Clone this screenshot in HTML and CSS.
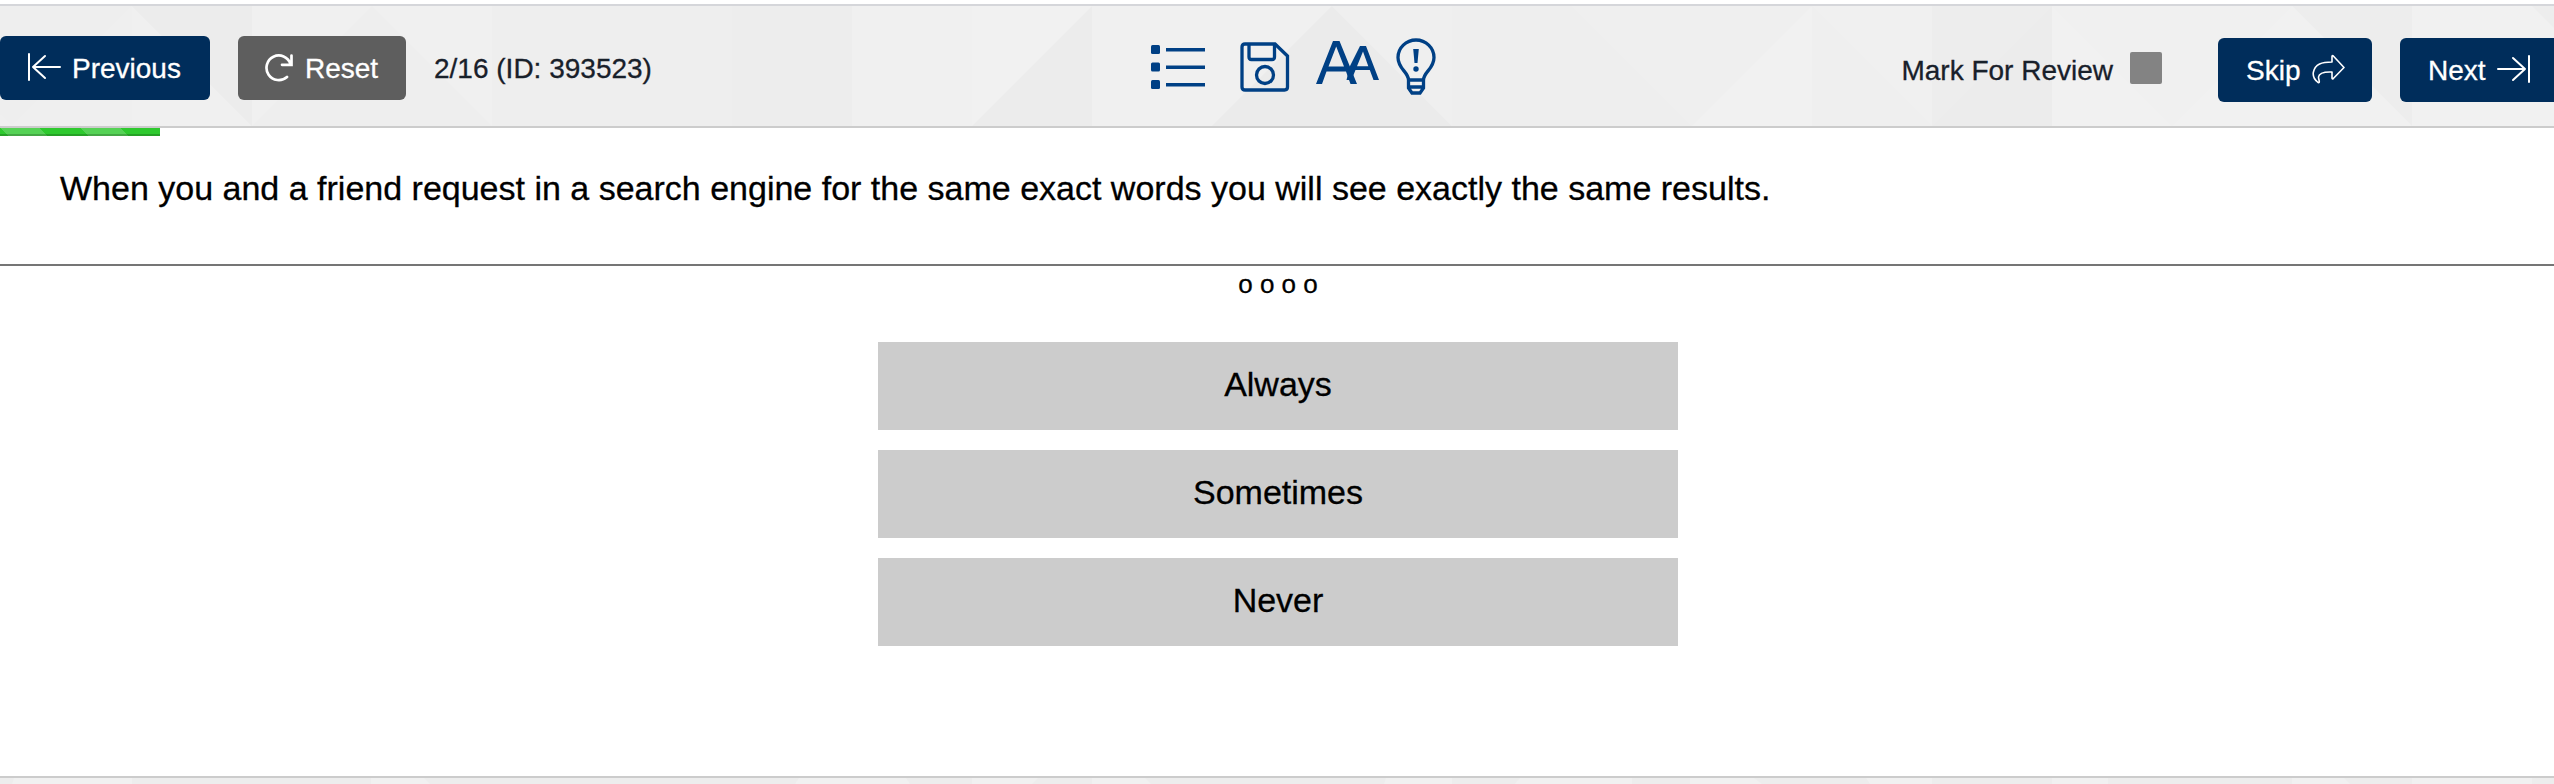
FILE: index.html
```
<!DOCTYPE html>
<html lang="en">
<head>
<meta charset="utf-8">
<title>Question 2/16</title>
<link rel="stylesheet" href="styles.css">
</head>
<body>
<header class="toolbar">
  <svg class="pattern" viewBox="0 0 2554 120" width="2554" height="120" aria-hidden="true">
    <path fill="#f0f0f0" d="M132 0v120h120zM252 0h120L252 120zM372 0h120v120zM852 0h120v120H852zM1092 0h120v120h-120zM1212 0h120l-120 120zM1812 0h120v120zM2052 0h120v120zM2172 0h120l-120 120z"/>
    <path fill="#ececec" d="M132 0h120v120zM972 120L1092 0v120zM1932 120L2052 0v120z"/>
    <path fill="#ededed" d="M732 0h120v120H732zM1932 0h120L1932 120zM2292 0h120v120zM2532 0h22v22z"/>
    <path fill="#ebebeb" d="M1212 120L1332 0l120 120z"/>
    <path fill="#f1f1f1" d="M972 0h120L972 120zM1692 120L1812 0v120zM2052 0v120h120zM2172 120L2292 0v120zM2292 0v120h120zM2412 0h120l22 22v98H2412z"/>
    <path fill="#efefef" d="M12 120L132 0v120zM0 108v12h12zM1332 0h120v120zM1572 0h240l-120 120zM1812 0v120h120z"/>
  </svg>
  <div class="group left">
    <button class="btn previous">
      <svg width="34" height="30" viewBox="0 0 34 30" fill="none" stroke="#fff" stroke-width="2" stroke-linecap="round" stroke-linejoin="round"><path d="M2 2v26M33 15H6M18 4L6 15l12 11"/></svg>
      <span>Previous</span>
    </button>
    <button class="btn reset">
      <svg width="30" height="30" viewBox="0 0 30 30" fill="none" stroke="#fff" stroke-width="2.7" stroke-linecap="round"><path d="M22 25A12.300 12.300 0 1 1 25.500 12M26.500 3.500v9.300h-9.500"/></svg>
      <span>Reset</span>
    </button>
    <span class="counter">2/16 (ID: 393523)</span>
  </div>
  <div class="tools">
    <svg width="54" height="46" viewBox="0 0 54 46" fill="#004085"><rect y="1" width="9" height="9" rx="1.500"/><rect y="18.500" width="9" height="9" rx="1.500"/><rect y="36" width="9" height="9" rx="1.500"/><path d="M15 4h39v3.500H15zM15 21.500h39V25H15zM15 39h39v3.500H15z"/></svg>
    <svg class="save" width="50" height="50" viewBox="0 0 50 50" fill="none" stroke="#004085" stroke-width="3.300"><path d="M5 2h30l12.500 12v31q0 3-3 3H5q-3 0-3-3V5q0-3 3-3z"/><path d="M9 2v13q0 2.500 2.500 2.500H32q2.500 0 2.500-2.500V2"/><circle cx="25" cy="33" r="8.500"/></svg>
    <svg class="font-size" width="63" height="46" viewBox="0 0 63 46" fill="#004085"><path fill-rule="evenodd" d="M0 45L17 2h6.500L41 45h-6.500L30 32.500H10.500L6 45zM12.500 27.500h15.500L20.200 7.500z"/><path fill-rule="evenodd" d="M34 27L44 7h6l13 34h-5.500l-3.700-10H39.500L35.500 41H30.500zM41 27.200h11.300L47 12.500z"/></svg>
    <svg class="hint" width="40" height="58" viewBox="0 0 40 58" fill="none" stroke="#004085" stroke-width="3.300"><path d="M12.500 50V42C12.500 34 2 31 2 19.500a18 17.500 0 0 1 36 0C38 31 27.500 34 27.500 42v8l-3.500 5h-8l-3.500-5zM12.500 42h15M12.500 49h15"/><path fill="#004085" stroke="none" d="M17.200 11h5.600l-1.300 14h-3z"/><circle cx="20" cy="31" r="2.700" fill="#004085" stroke="none"/></svg>
  </div>
  <div class="group right">
    <label class="review">Mark For Review<span class="checkbox"></span></label>
    <button class="btn skip">
      <span>Skip</span>
      <svg width="33" height="30" viewBox="0 0 33 30" fill="none" stroke="#fff" stroke-width="1.600" stroke-linejoin="round"><path d="M20 8V2.500q0-1.500 1.300-.5L32 13.500 21.300 24.500q-1.300 1-1.300-.5v-6c-8-.3-13 1-13.500 5 0 2 .8 3 .8 5 0 1-1 .8-1.800 0C2 25 .8 22 1.300 18.500 3 10 10 8 20 8z"/></svg>
    </button>
    <button class="btn next">
      <span>Next</span>
      <svg width="34" height="30" viewBox="0 0 34 30" fill="none" stroke="#fff" stroke-width="2" stroke-linecap="round" stroke-linejoin="round"><path d="M32 2v26M1 15h27M16 4l12 11-12 11"/></svg>
    </button>
  </div>
</header>
<div class="progress"></div>
<main class="content">
  <section class="question">When you and a friend request in a search engine for the same exact words you will see exactly the same results.</section>
  <div class="handle">o o o o</div>
  <div class="answers">
    <div class="answer">Always</div>
    <div class="answer">Sometimes</div>
    <div class="answer">Never</div>
  </div>
</main>
<footer class="footer">
  <svg class="strip" viewBox="0 0 2554 6" width="2554" height="6" aria-hidden="true"><path fill="#f1f1f1" d="M14 0h118v6H12zM371 0h53l6 6h-59zM799 0h107l4 6H795zM972 0h66l-6 6h-60zM1092 0h53l6 6h-59zM1386 0h66v6h-68zM1520 0h112v6h-117zM1690 0h64l8 6h-72zM1866 0h66v6h-62zM2052 0h56v6h-56zM2292 0h52l6 6h-58zM2412 0h120v6h-120z"/></svg>
</footer>
</body>
</html>
```
FILE: styles.css
```
* { box-sizing: border-box; }
body {
  margin: 0;
  height: 784px;
  display: flex;
  flex-direction: column;
  overflow: hidden;
  background: #fff;
  color: #000;
  font-family: "Liberation Sans", Arial, sans-serif;
  -webkit-text-stroke: .3px currentColor;
}
svg { display: block; flex: none; }
.toolbar {
  position: relative;
  flex: none;
  height: 124px;
  margin-top: 4px;
  display: grid;
  grid-template-columns: 1151px 1fr auto;
  border-top: 2px solid #d5d6da;
  border-bottom: 2px solid #ccc;
  background: #eee;
  color: #18202a;
  font-size: 28px;
}
.pattern { position: absolute; inset: 0; }
.group, .tools { position: relative; display: flex; align-items: flex-start; }
.left { padding-top: 30px; }
.right { padding-top: 32px; }
.btn {
  display: flex;
  align-items: center;
  height: 64px;
  padding: 0 0 2px;
  border: 0;
  border-radius: 6px;
  background: #002d5b;
  color: #fff;
  font: 28px/32px "Liberation Sans", Arial, sans-serif;
}
.btn span { padding-top: 3px; }
.previous { width: 210px; padding-left: 27px; gap: 11px; }
.reset { width: 168px; margin-left: 28px; padding-left: 27px; gap: 10px; background: #5e5e5e; }
.counter { margin-left: 28px; line-height: 65px; }
.tools { padding-top: 31px; }
.tools svg { margin-top: 7px; }
.tools .save { margin: 5px 0 0 35px; }
.tools .font-size { margin: 2px 0 0 26px; }
.tools .hint { margin: 1px 0 0 17px; }
.review { display: flex; line-height: 65px; }
.checkbox { width: 32px; height: 32px; margin: 14px 0 0 17px; border-radius: 2px; background: #838383; }
.skip { width: 154px; margin-left: 56px; padding-left: 28px; gap: 12px; }
.next { width: 154px; margin-left: 28px; padding-left: 28px; gap: 11px; border-radius: 6px 0 0 6px; }
.progress {
  flex: none;
  width: 160px;
  height: 8px;
  background:
    linear-gradient(transparent 6px, rgba(0, 0, 0, .2) 6px),
    repeating-linear-gradient(45deg, #2ec92e 0 5.66px, #55d255 5.66px 33.94px, #2ec92e 33.94px 56.57px);
}
.content { flex: 1; }
.question {
  height: 130px;
  padding: 32px 60px 0;
  border-bottom: 2px solid #757575;
  font-size: 34px;
  line-height: 40px;
}
.handle { height: 76px; padding: 2px 0 0 2px; text-align: center; font-size: 26px; line-height: 32px; }
.answers { display: grid; gap: 20px; width: 800px; margin: 0 auto 0 878px; }
.answer { height: 88px; background: #ccc; text-align: center; font-size: 34px; line-height: 84px; }
.footer { flex: none; height: 8px; border-top: 2px solid #ccc; background: #ededed; }
```
